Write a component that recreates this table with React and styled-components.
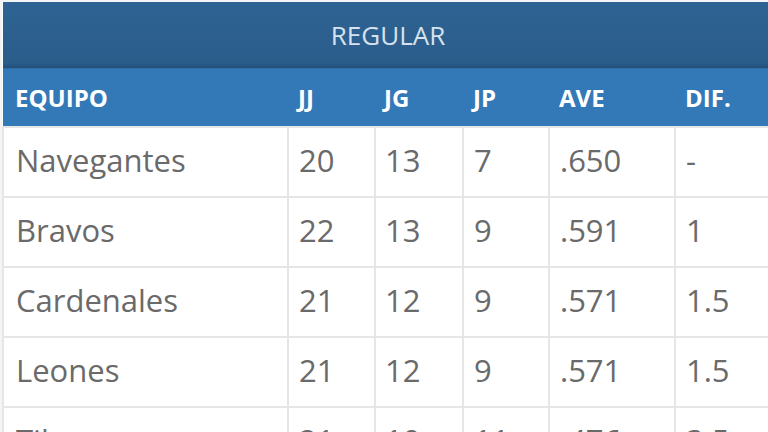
import React from 'react'
import styled, { createGlobalStyle } from 'styled-components'

const GlobalStyle = createGlobalStyle`
  html, body {
    margin: 0;
    padding: 0;
    background: #ffffff;
    overflow: hidden;
  }
  body {
    font-family: 'Open Sans', 'Noto Sans', sans-serif;
  }
`

const Page = styled.div`
  width: 768px;
  height: 432px;
  overflow: hidden;
  padding: 2px 0 0 2px;
  box-sizing: border-box;
  background: #f4f4f4;
`

const Table = styled.table`
  width: 800px;
  border-collapse: collapse;
  table-layout: fixed;
  background: #ffffff;
`

const TitleCell = styled.th`
  height: 66px;
  padding: 0 30px 0 0;
  background: linear-gradient(#2e6393, #2b5d8b 92%, #24507a);
  color: #d6e2ee;
  font-weight: 400;
  font-size: 26px;
  text-align: center;
`

const HeadCell = styled.th`
  height: 57px;
  padding: 0 0 0 ${({ $pad }) => $pad || 10}px;
  background: #3479b7;
  color: #ffffff;
  font-weight: 700;
  font-size: 24px;
  text-align: left;
  border-top: 1px solid #2f6ea6;
`

const Row = styled.tr`
  height: 70px;
`

const Cell = styled.td`
  padding: 0 0 4px ${({ $pad }) => $pad || 10}px;
  color: #6a6a6a;
  font-size: 31px;
  font-weight: 400;
  border: 2px solid #e6e6e6;
  white-space: nowrap;
`

const columns = [
  { key: 'team', label: 'EQUIPO', width: 285, pad: 12 },
  { key: 'jj', label: 'JJ', width: 87 },
  { key: 'jg', label: 'JG', width: 88, pad: 9 },
  { key: 'jp', label: 'JP', width: 86 },
  { key: 'ave', label: 'AVE', width: 126 },
  { key: 'dif', label: 'DIF.', width: 128 },
]

const standings = [
  { team: 'Navegantes', jj: '20', jg: '13', jp: '7', ave: '.650', dif: '-' },
  { team: 'Bravos', jj: '22', jg: '13', jp: '9', ave: '.591', dif: '1' },
  { team: 'Cardenales', jj: '21', jg: '12', jp: '9', ave: '.571', dif: '1.5' },
  { team: 'Leones', jj: '21', jg: '12', jp: '9', ave: '.571', dif: '1.5' },
  { team: 'Tiburones', jj: '21', jg: '10', jp: '11', ave: '.476', dif: '3.5' },
]

export default function App() {
  return (
    <Page>
      <GlobalStyle />
      <Table>
        <colgroup>
          {columns.map((c) => (
            <col key={c.key} style={{ width: c.width }} />
          ))}
        </colgroup>
        <thead>
          <tr>
            <TitleCell colSpan={columns.length}>REGULAR</TitleCell>
          </tr>
          <tr>
            {columns.map((c) => (
              <HeadCell key={c.key} $pad={c.pad}>
                {c.label}
              </HeadCell>
            ))}
          </tr>
        </thead>
        <tbody>
          {standings.map((s) => (
            <Row key={s.team}>
              {columns.map((c) => (
                <Cell key={c.key} $pad={c.pad}>
                  {s[c.key]}
                </Cell>
              ))}
            </Row>
          ))}
        </tbody>
      </Table>
    </Page>
  )
}
